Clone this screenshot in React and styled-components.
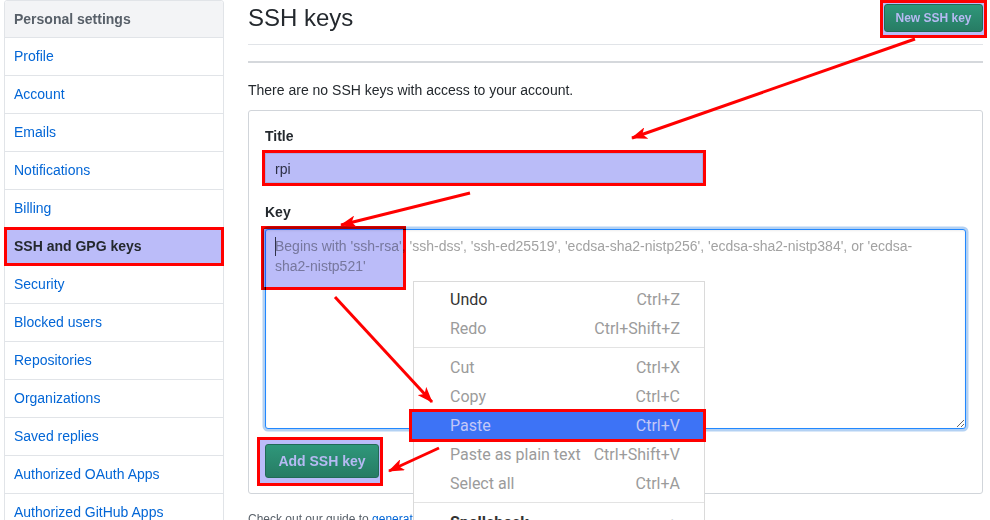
import React from 'react';
import styled, { createGlobalStyle } from 'styled-components';

const Global = createGlobalStyle`
  html, body { margin: 0; padding: 0; background: #fff; }
  body {
    font-family: "Liberation Sans", Arial, sans-serif;
    font-size: 14px;
    color: #24292e;
    width: 990px;
    height: 520px;
    overflow: hidden;
  }
`;

const Page = styled.div`
  position: relative;
  display: flex;
  align-items: flex-start;
  gap: 24px;
  padding-left: 4px;
  width: 990px;
  height: 520px;
  box-sizing: border-box;
  overflow: hidden;
`;

const Sidebar = styled.nav`
  flex: none;
  width: 220px;
  box-sizing: border-box;
  border: 1px solid #e1e4e8;
  border-radius: 3px 3px 0 0;
  background: #fff;
`;

const SideHeader = styled.div`
  height: 36px;
  line-height: 36px;
  padding: 0 9px;
  background: #f3f4f6;
  color: #586069;
  font-weight: bold;
  border-bottom: 1px solid #e1e4e8;
  border-radius: 3px 3px 0 0;
`;

const SideItem = styled.a`
  display: block;
  height: 37px;
  line-height: 37px;
  padding: 0 9px;
  color: #0366d6;
  text-decoration: none;
  border-bottom: 1px solid #e1e4e8;
  white-space: nowrap;
`;

const SideSelected = styled.a`
  display: block;
  box-sizing: border-box;
  height: 39px;
  line-height: 33px;
  margin: -1px -1px 0;
  padding: 0 7px;
  border: 3px solid #ff0000;
  background: #bbbcf9;
  color: #24292e;
  font-weight: bold;
  text-decoration: none;
`;

const Main = styled.main`
  flex: none;
  width: 735px;
`;

const Header = styled.div`
  display: flex;
  justify-content: space-between;
  align-items: flex-start;
  height: 44px;
  border-bottom: 1px solid #e1e4e8;
`;

const Title = styled.h2`
  margin: 0;
  font-size: 24px;
  font-weight: normal;
  line-height: 36px;
  color: #24292e;
`;

const Highlight = styled.div`
  width: fit-content;
  border: 3px solid #ff0000;
  background: #bbbcf9;
  box-sizing: border-box;
`;

const HeaderHighlight = styled(Highlight)`
  padding: 1px 1px 3px;
  margin-right: -4px;
`;

const GreenButton = styled.button`
  display: block;
  box-sizing: border-box;
  font-family: "Liberation Sans", Arial, sans-serif;
  font-weight: bold;
  font-size: ${(p) => p.$size}px;
  width: ${(p) => p.$w}px;
  height: ${(p) => p.$h}px;
  padding: 0;
  color: #b6baf3;
  background: linear-gradient(#2f977a, #277c64);
  border: 1px solid #216b56;
  border-radius: 3px;
`;

const Divider = styled.div`
  margin-top: 16px;
  height: 2px;
  background: #d5d8dc;
`;

const Lead = styled.p`
  margin: 17px 0 10px;
  line-height: 20px;
  color: #24292e;
`;

const FormBox = styled.div`
  border: 1px solid #d1d5da;
  border-radius: 3px;
  padding: 15px 16px 7px;
`;

const Label = styled.div`
  font-weight: bold;
  line-height: 20px;
  margin-top: ${(p) => p.$mt || 0}px;
`;

const TitleHighlight = styled(Highlight)`
  width: 444px;
  height: 36px;
  margin: 4px 0 0 -3px;
`;

const TitleInput = styled.div`
  box-sizing: border-box;
  height: 30px;
  line-height: 30px;
  padding-left: 9px;
  border: 1px solid #a9abe4;
  background: #babcf8;
  color: #2c2f45;
`;

const KeyWrap = styled.div`
  position: relative;
  margin-top: 7px;
  height: 200px;
`;

const KeyArea = styled.textarea`
  display: block;
  box-sizing: border-box;
  width: 100%;
  height: 200px;
  margin: 0;
  padding: 6px 30px 6px 9px;
  font-family: "Liberation Sans", Arial, sans-serif;
  font-size: 14px;
  line-height: 20px;
  border: 1px solid #2188ff;
  border-radius: 3px;
  outline: none;
  background: #fff;
  box-shadow: inset 0 1px 2px rgba(27, 31, 35, 0.075), 0 0 0 2.5px rgba(3, 102, 214, 0.3);
  resize: vertical;
  &::placeholder { color: #a2a2a2; }
`;

const KeyOverlay = styled.div`
  position: absolute;
  left: -4px;
  top: -3px;
  width: 145px;
  height: 64px;
  box-sizing: border-box;
  border: 3px solid #ff0000;
  background: #bbbcf9;
  mix-blend-mode: multiply;
`;

const Caret = styled.div`
  position: absolute;
  left: 11px;
  top: 8px;
  width: 1px;
  height: 19px;
  background: #30324a;
`;

const AddHighlight = styled(Highlight)`
  margin: 8px 0 0 -8px;
  padding: 4px 1px 5px 5px;
`;

const Footnote = styled.p`
  margin: 16px 0 0;
  font-size: 12px;
  line-height: 18px;
  color: #586069;
  white-space: nowrap;
`;

const Link = styled.a`
  color: #0366d6;
  text-decoration: none;
`;

const Menu = styled.div`
  position: absolute;
  left: 413px;
  top: 281px;
  width: 292px;
  box-sizing: border-box;
  padding-top: 3px;
  background: #fff;
  border: 1px solid #dadada;
  font-family: Roboto, "Noto Sans", sans-serif;
  font-size: 16px;
`;

const MenuItem = styled.div`
  display: flex;
  justify-content: space-between;
  align-items: center;
  height: 29px;
  padding: 0 24px 0 36px;
  color: ${(p) => (p.$enabled ? '#333' : '#9b9b9b')};
  font-weight: ${(p) => (p.$bold ? 'bold' : 'normal')};
`;

const Shortcut = styled.span`
  color: #9b9b9b;
`;

const ActiveItem = styled.div`
  display: flex;
  justify-content: space-between;
  align-items: center;
  box-sizing: border-box;
  height: 33px;
  margin: -2px -2px -2px -5px;
  padding: 0 23px 0 38px;
  border: 3px solid #ff0000;
  background: #3d73f6;
  color: #c3c8f6;
  position: relative;
`;

const MenuSep = styled.div`
  height: 1px;
  margin: 4px 0 5px;
  background: #e3e3e3;
`;

const Arrows = styled.svg`
  position: absolute;
  left: 0;
  top: 0;
  pointer-events: none;
`;

const sideItems = [
  'Profile', 'Account', 'Emails', 'Notifications', 'Billing',
  'SSH and GPG keys', 'Security', 'Blocked users', 'Repositories',
  'Organizations', 'Saved replies', 'Authorized OAuth Apps', 'Authorized GitHub Apps',
];

const arrowLines = [
  [915, 39, 632, 138],
  [470, 193, 341, 225],
  [335, 297, 432, 402],
  [439, 448, 389, 471],
];

export default function App() {
  return (
    <>
      <Global />
      <Page>
        <Sidebar>
          <SideHeader>Personal settings</SideHeader>
          {sideItems.map((name) =>
            name === 'SSH and GPG keys' ? (
              <SideSelected key={name}>{name}</SideSelected>
            ) : (
              <SideItem key={name}>{name}</SideItem>
            )
          )}
        </Sidebar>

        <Main>
          <Header>
            <Title>SSH keys</Title>
            <HeaderHighlight>
              <GreenButton $size={12} $w={99} $h={28}>New SSH key</GreenButton>
            </HeaderHighlight>
          </Header>
          <Divider />
          <Lead>There are no SSH keys with access to your account.</Lead>
          <FormBox>
            <Label>Title</Label>
            <TitleHighlight>
              <TitleInput>rpi</TitleInput>
            </TitleHighlight>
            <Label $mt={16}>Key</Label>
            <KeyWrap>
              <KeyArea
                readOnly
                placeholder="Begins with 'ssh-rsa', 'ssh-dss', 'ssh-ed25519', 'ecdsa-sha2-nistp256', 'ecdsa-sha2-nistp384', or 'ecdsa-sha2-nistp521'"
              />
              <KeyOverlay>
                <Caret />
              </KeyOverlay>
            </KeyWrap>
            <AddHighlight>
              <GreenButton $size={14} $w={114} $h={34}>Add SSH key</GreenButton>
            </AddHighlight>
          </FormBox>
          <Footnote>
            Check out our guide to <Link>generating SSH keys</Link> or{' '}
            <Link>troubleshoot common SSH Problems</Link>.
          </Footnote>
        </Main>

        <Menu>
          <MenuItem $enabled>
            <span>Undo</span>
            <Shortcut>Ctrl+Z</Shortcut>
          </MenuItem>
          <MenuItem>
            <span>Redo</span>
            <Shortcut>Ctrl+Shift+Z</Shortcut>
          </MenuItem>
          <MenuSep />
          <MenuItem>
            <span>Cut</span>
            <Shortcut>Ctrl+X</Shortcut>
          </MenuItem>
          <MenuItem>
            <span>Copy</span>
            <Shortcut>Ctrl+C</Shortcut>
          </MenuItem>
          <ActiveItem>
            <span>Paste</span>
            <span>Ctrl+V</span>
          </ActiveItem>
          <MenuItem>
            <span>Paste as plain text</span>
            <Shortcut>Ctrl+Shift+V</Shortcut>
          </MenuItem>
          <MenuItem>
            <span>Select all</span>
            <Shortcut>Ctrl+A</Shortcut>
          </MenuItem>
          <MenuSep />
          <MenuItem $enabled $bold>
            <span>Spellcheck</span>
            <Shortcut>▸</Shortcut>
          </MenuItem>
        </Menu>

        <Arrows width="990" height="520" viewBox="0 0 990 520">
          <defs>
            <marker
              id="head"
              viewBox="0 0 16 12"
              refX="15"
              refY="6"
              markerWidth="16"
              markerHeight="12"
              markerUnits="userSpaceOnUse"
              orient="auto"
            >
              <path d="M0,0 L16,6 L0,12 L4,6 Z" fill="#ff0000" />
            </marker>
          </defs>
          {arrowLines.map(([x1, y1, x2, y2], i) => (
            <line
              key={i}
              x1={x1}
              y1={y1}
              x2={x2}
              y2={y2}
              stroke="#ff0000"
              strokeWidth="3"
              markerEnd="url(#head)"
            />
          ))}
        </Arrows>
      </Page>
    </>
  );
}
